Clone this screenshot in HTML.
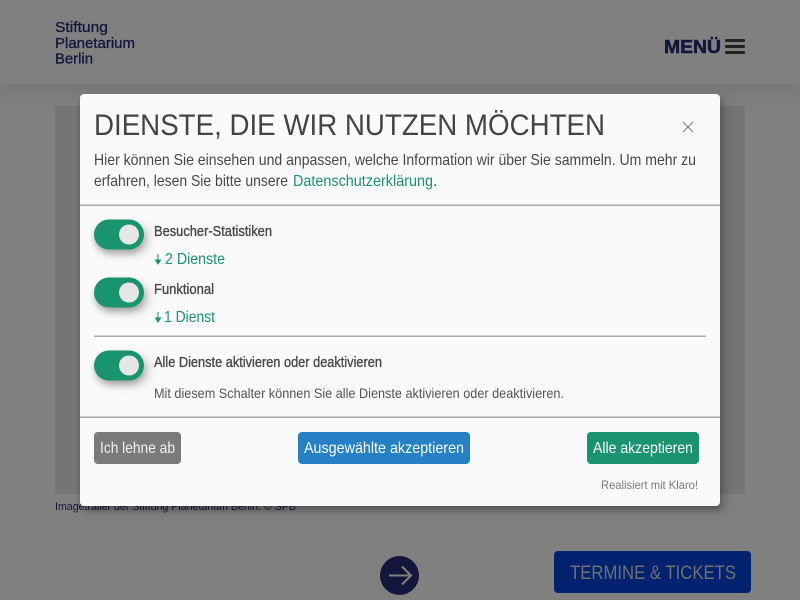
<!DOCTYPE html>
<html lang="de">
<head>
<meta charset="utf-8">
<title>Stiftung Planetarium Berlin</title>
<style>
html,body{margin:0;padding:0;width:800px;height:600px;overflow:hidden;background:#808080}
body{position:relative;font-family:"Liberation Sans",sans-serif}
.a{position:absolute}
.hdr{left:0;top:0;width:800px;height:84px;background:#808080;box-shadow:0 3px 22px rgba(0,0,0,.13)}
.img{left:55px;top:106px;width:690px;height:388px;background:#757575}
.modal{left:80px;top:94px;width:640px;height:412px;background:#fafafa;border-radius:4px;box-shadow:0 4px 6px rgba(0,0,0,.2),5px 5px 10px rgba(0,0,0,.19)}
.hr{background:#a8a8a8;height:1px;box-shadow:0 -1px 0 #d4d4d4}
.tg{left:94px;width:50px;height:30px;border-radius:15px;background:#1a936f;transform:translateY(-.5px);box-shadow:0 4px 6px rgba(0,0,0,.2),5px 5px 10px rgba(0,0,0,.19)}
.tg i{position:absolute;left:25px;top:5px;width:20px;height:20px;border-radius:50%;background:#e6e6e6}
.btn{top:432px;height:32px;border-radius:4px}
.bar{left:725px;width:20px;height:3px;background:#222;border-radius:1px}
svg{position:absolute;left:0;top:0}
</style>
</head>
<body>
<div class="a hdr"></div>
<div class="a img"></div>
<div class="a bar" style="top:39px"></div>
<div class="a bar" style="top:45px"></div>
<div class="a bar" style="top:51px"></div>
<div class="a" style="left:554px;top:551px;width:197px;height:42px;border-radius:4px;background:#00226f"></div>
<div class="a" style="left:380px;top:556px;width:39px;height:39px;border-radius:50%;background:#12163a"></div>

<svg width="800" height="600" viewBox="0 0 800 600" font-family="'Liberation Sans',sans-serif">
  <g fill="#12163a">
    <g stroke="#12163a" stroke-width=".3">
      <text x="55" y="32" font-size="15" textLength="53" lengthAdjust="spacingAndGlyphs">Stiftung</text>
      <text x="55" y="48" font-size="15" textLength="80" lengthAdjust="spacingAndGlyphs">Planetarium</text>
      <text x="55" y="63.500" font-size="15" textLength="38" lengthAdjust="spacingAndGlyphs">Berlin</text>
    </g>
    <text x="664" y="53" font-size="18.500" font-weight="700" stroke="#12163a" stroke-width=".5" textLength="57" lengthAdjust="spacingAndGlyphs">MENÜ</text>
    <text x="55" y="510" font-size="11" textLength="241" lengthAdjust="spacingAndGlyphs">Imagetrailer der Stiftung Planetarium Berlin. © SPB</text>
  </g>
  <text x="570" y="579" font-size="19" fill="#717171" textLength="166" lengthAdjust="spacingAndGlyphs">TERMINE &amp; TICKETS</text>
  <path d="M389 575.500H411M402 566.500L411 575.500L402 584.500" fill="none" stroke="#808080" stroke-width="2"/>
</svg>

<div class="a modal"></div>
<div class="a hr" style="left:80px;top:205px;width:640px"></div>
<div class="a hr" style="left:94px;top:336px;width:612px"></div>
<div class="a hr" style="left:80px;top:417px;width:640px"></div>
<div class="a tg" style="top:220px"><i></i></div>
<div class="a tg" style="top:278px"><i></i></div>
<div class="a tg" style="top:351px"><i></i></div>
<div class="a btn" style="left:94px;width:87px;background:#7b7b7b"></div>
<div class="a btn" style="left:298px;width:172px;background:#2581c4"></div>
<div class="a btn" style="left:587px;width:112px;background:#1a936f"></div>

<svg width="800" height="600" viewBox="0 0 800 600" font-family="'Liberation Sans',sans-serif">
  <text x="94" y="135" font-size="30" fill="#444" textLength="511" lengthAdjust="spacingAndGlyphs">DIENSTE, DIE WIR NUTZEN MÖCHTEN</text>
  <path d="M683 122L693 132M693 122L683 132" stroke="#777" stroke-width="1" fill="none"/>
  <text x="94" y="165" font-size="16" fill="#484848" textLength="602" lengthAdjust="spacingAndGlyphs">Hier können Sie einsehen und anpassen, welche Information wir über Sie sammeln. Um mehr zu</text>
  <text x="94" y="186" font-size="16" fill="#484848" textLength="194" lengthAdjust="spacingAndGlyphs">erfahren, lesen Sie bitte unsere</text>
  <text x="293" y="186" font-size="16" fill="#1a936f" textLength="140" lengthAdjust="spacingAndGlyphs">Datenschutzerklärung</text>
  <text x="433" y="186" font-size="16" fill="#484848">.</text>

  <g fill="#484848" stroke="#484848" stroke-width=".35">
    <text x="154" y="236" font-size="14.500" textLength="118" lengthAdjust="spacingAndGlyphs">Besucher-Statistiken</text>
    <text x="154" y="294" font-size="14.500" textLength="60" lengthAdjust="spacingAndGlyphs">Funktional</text>
    <text x="154" y="367" font-size="14.500" textLength="228" lengthAdjust="spacingAndGlyphs">Alle Dienste aktivieren oder deaktivieren</text>
  </g>
  <path d="M158 254V263M155.500 260L158 264L160.500 260Z" stroke="#1a936f" fill="#1a936f" stroke-width="1"/>
  <text x="165" y="264" font-size="16" fill="#1a936f" textLength="60" lengthAdjust="spacingAndGlyphs">2 Dienste</text>
  <path d="M158 312V321M155.500 318L158 322L160.500 318Z" stroke="#1a936f" fill="#1a936f" stroke-width="1"/>
  <text x="164" y="322" font-size="16" fill="#1a936f" textLength="51" lengthAdjust="spacingAndGlyphs">1 Dienst</text>
  <text x="154" y="398" font-size="14" fill="#555" textLength="410" lengthAdjust="spacingAndGlyphs">Mit diesem Schalter können Sie alle Dienste aktivieren oder deaktivieren.</text>

  <text x="100" y="453" font-size="16" fill="#f0f0f0" textLength="75" lengthAdjust="spacingAndGlyphs">Ich lehne ab</text>
  <text x="304" y="453" font-size="16" fill="#fafafa" textLength="160" lengthAdjust="spacingAndGlyphs">Ausgewählte akzeptieren</text>
  <text x="593" y="453" font-size="16" fill="#fafafa" textLength="100" lengthAdjust="spacingAndGlyphs">Alle akzeptieren</text>
  <text x="601" y="489" font-size="12" fill="#7b7b7b" textLength="97" lengthAdjust="spacingAndGlyphs">Realisiert mit Klaro!</text>
</svg>
</body>
</html>
